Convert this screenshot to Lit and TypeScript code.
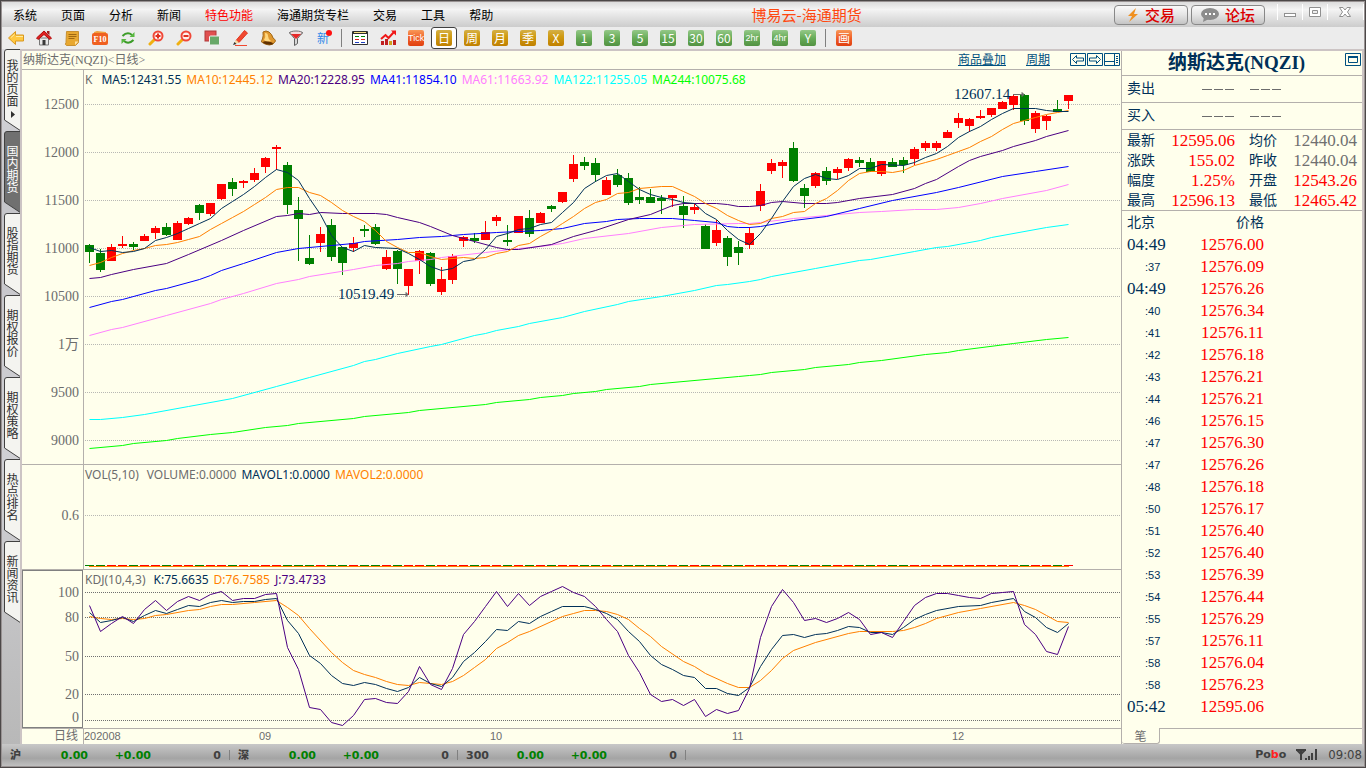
import { LitElement, html, svg, css } from "lit";
import { customElement, state } from "lit/decorators.js";
import { classMap } from "lit/directives/class-map.js";

/* [direction, bodyTop, bodyBottom, high, low] for each trading day */
const CANDLES = `g245 252 244 263|g253 270 249 272|r247 261 244 261|r244 246 236 248|g244 247 242 250|r236 241 234 241|r228 233 226 239|g227 235 223 236|r223 240 221 240|r218 224 217 225|g205 213 204 220|r203 214 203 216|r184 199 184 200|g182 189 178 196|r181 183 180 188|r173 180 168 182|r158 167 157 173|r147 149 145 170|g165 205 162 214|g210 219 197 261|g258 264 235 265|r234 243 227 252|g225 257 219 261|g247 263 247 275|r243 248 237 252|g229 231 225 237|g227 244 224 245|r257 269 250 270|g251 269 250 284|r269 286 269 295|r251 261 250 274|g253 284 252 286|r279 292 267 295|r256 280 254 284|r237 241 236 247|g238 241 233 243|r232 240 221 240|r217 221 215 226|g240 242 225 246|r216 233 216 233|g218 234 210 237|r213 223 212 223|g206 209 205 212|r192 202 192 203|r164 179 155 182|g162 166 157 170|g163 175 158 182|r180 195 177 195|g175 185 169 187|g178 203 173 205|g197 200 187 204|g197 203 189 203|g198 201 195 214|r195 198 195 207|g206 215 196 228|r207 210 203 214|g226 249 224 249|r230 243 220 246|g238 257 236 266|g247 253 241 265|r233 245 227 249|r191 206 184 211|r163 171 159 174|r162 166 160 178|g148 181 142 182|g188 196 184 208|r173 186 172 188|g171 181 167 185|r169 173 167 179|r159 168 158 171|g160 163 157 167|g162 172 158 172|r161 174 161 176|g162 167 158 167|g160 165 157 173|r149 159 147 165|r143 148 141 151|r143 148 141 151|r132 138 130 138|r118 123 113 128|r119 126 118 132|r116 118 110 119|r108 115 108 117|r102 109 101 109|r96 105 95 110|g95 121 94 125|r113 129 111 133|r116 121 115 130|g109 112 100 112|r95 101 95 109`
  .split("|")
  .map((s) => ({ up: s[0] === "r", v: s.slice(1).split(" ").map(Number) }));

/* "index y" pairs; a missing index is interpolated by the line itself */
const LINES: Record<string, string> = {
  ma5: "0 247,1 251,2 250,3 252,4 251,5 248,6 240,7 237,8 233,9 228,10 223,11 218,12 208,13 201,14 194,15 186,16 177,17 169,18 172,19 180,20 198,21 214,22 235,23 247,24 251,25 245,26 247,28 248,29 253,30 259,31 266,32 270,33 268,34 261,35 259,36 249,37 236,38 233,39 229,40 228,41 224,42 222,43 212,44 202,45 188,46 181,47 175,48 173,49 181,50 189,51 194,52 197,53 199,54 202,55 203,56 213,57 219,58 230,59 239,60 244,61 233,62 218,63 201,64 186,65 178,66 174,67 178,68 179,69 175,70 168,71 168,72 164,74 165,75 162,76 157,77 153,78 146,79 137,80 131,81 126,82 119,83 113,84 108,86 108,87 110,88 111,89 111",
  ma10: "0 265,1 262,2 257,3 253,4 250,5 248,6 245,7 244,8 242,9 239,10 236,11 229,12 223,13 217,14 211,15 204,16 197,17 189,18 187,19 187,20 192,21 195,22 202,23 210,24 216,25 221,26 230,27 241,28 247,29 252,30 252,31 256,32 259,34 257,35 258,36 257,37 253,38 251,39 245,40 243,41 236,42 230,43 223,44 216,45 208,46 202,47 199,48 193,49 192,50 188,51 187,52 186,53 186,54 191,55 196,56 203,57 208,58 215,59 220,60 224,61 223,62 218,63 216,64 212,65 211,66 203,67 198,68 190,69 180,70 173,71 171,72 171,73 172,74 170,75 165,76 162,77 159,78 155,79 151,80 147,81 141,82 136,83 129,84 123,85 120,86 117,87 114,88 112,89 110",
  ma20: "0 278,1 277,2 274,4 269,7 263,9 254,12 240,14 230,17 216,18 215,19 213,20 214,21 212,23 213,26 213,27 214,28 217,30 222,31 226,33 235,35 241,37 247,38 249,39 249,42 244,44 236,46 230,49 219,51 214,53 205,54 203,57 203,58 204,59 206,60 206,61 205,62 202,63 201,65 203,67 203,68 202,70 198,73 194,75 188,76 183,77 179,79 166,80 160,81 156,83 150,84 146,86 140,87 136,89 130",
  ma41: "0 307,2 301,3 299,6 290,7 288,10 279,11 275,12 270,14 263,17 252,19 248,22 245,24 243,25 241,28 239,30 237,32 236,34 234,37 232,41 230,43 228,45 223,47 221,48 219,50 218,53 218,55 220,57 222,58 226,59 227,60 227,61 226,64 220,67 216,70 208,73 200,77 192,79 187,83 176,86 171,89 166",
  ma61: "0 335,2 329,3 327,7 315,11 303,12 299,14 293,17 283,19 279,20 276,24 269,26 265,28 263,29 261,31 259,32 257,36 252,39 248,41 246,43 243,45 238,49 233,52 227,54 225,55 224,59 223,60 223,61 222,64 218,68 214,70 212,72 211,75 209,77 209,79 207,81 203,83 198,87 190,89 184",
  ma122: "0 419,1 419,3 417,5 414,9 406,13 398,17 386,20 377,24 365,25 361,26 359,28 353,31 346,32 344,35 335,36 333,37 330,39 326,40 323,43 317,45 311,48 304,49 301,52 296,55 290,57 285,58 284,60 281,61 279,62 276,66 268,70 260,71 259,75 251,77 247,78 246,81 240,82 237,87 227,89 224",
  ma244: "0 448,3 445,4 443,7 440,8 438,11 434,13 432,16 427,18 425,19 423,24 418,25 416,29 412,30 410,36 404,37 402,40 399,41 397,43 395,44 393,46 391,47 389,50 386,51 384,59 376,60 375,61 374,62 372,65 369,66 367,69 364,70 362,72 360,76 354,78 352,79 350,84 343,87 339,89 337",
  k: "0 612,1 622,2 620,3 617,4 621,5 615,6 610,7 613,8 609,9 605,10 606,11 602,12 600,13 602,14 601,15 601,16 599,17 598,18 620,19 633,20 655,21 663,22 675,23 683,24 685,25 682,26 684,27 688,28 691,29 687,30 677,31 683,32 686,33 677,34 661,35 652,36 641,37 629,38 630,39 621,40 623,41 616,42 611,43 606,45 606,46 609,47 613,48 619,49 631,50 641,51 655,52 664,53 669,54 675,55 677,56 688,57 688,58 693,59 695,60 687,61 666,62 649,63 635,64 634,65 637,66 634,67 633,68 630,69 626,70 627,71 632,72 632,73 634,74 627,75 619,76 614,77 610,79 606,81 605,82 602,84 598,85 611,86 617,87 627,88 632,89 623",
  d: "0 616,1 618,2 619,3 618,4 619,5 618,6 615,7 614,9 610,10 609,11 606,12 604,13 604,15 602,17 600,18 607,19 615,20 628,22 652,23 662,24 670,25 674,26 677,27 681,28 684,29 685,30 682,32 684,33 681,34 675,35 667,36 659,37 648,38 642,39 635,40 631,43 616,44 613,45 610,46 610,47 611,48 614,49 619,50 628,51 636,52 646,54 661,55 666,56 673,58 683,59 687,60 687,61 680,62 670,63 658,64 650,66 642,69 633,70 631,73 631,74 630,75 627,76 623,77 618,79 612,81 608,84 602,85 605,86 609,87 615,88 621,89 622",
  j: "0 605,1 631,2 623,3 616,4 623,5 609,6 600,7 610,8 601,9 596,10 600,11 594,12 591,13 600,14 598,15 598,16 594,17 593,18 647,19 669,20 707,21 709,22 722,23 725,24 715,25 699,26 698,27 702,28 703,29 691,30 666,31 684,32 689,33 668,34 634,35 621,36 606,37 591,38 606,39 593,40 605,41 596,42 591,43 586,44 592,45 596,46 606,47 619,48 631,49 655,50 672,51 694,52 701,53 699,54 705,55 699,56 716,57 709,58 713,59 710,60 688,61 637,62 606,63 589,64 602,65 620,66 618,67 622,68 618,69 612,70 619,71 634,72 632,73 637,74 621,75 605,76 597,77 593,78 593,79 595,80 597,81 598,82 593,83 592,84 591,85 624,86 634,87 651,88 654,89 626",
};

const STEP = 11;
const HALF = 0.5;

const poly = (name: string, top: number) => {
  const pts = LINES[name]
    .split(",")
    .map((p) => p.split(" ").map(Number))
    .map(([i, y]) => `${5 + HALF + i * STEP},${y - top + HALF}`)
    .join(" ");
  return svg`<polyline class="line ${name}" points=${pts}></polyline>`;
};

const gridLine = (y: number, cls = "grid") =>
  svg`<line class=${cls} x1="1" x2="100%" y1=${y + HALF} y2=${y + HALF}></line>`;

/* ---------- chart ---------- */
@customElement("quote-chart")
class QuoteChart extends LitElement {
  static styles = css`
    :host { display: flex; flex-direction: column; min-width: 0; min-height: 0; background: #ffffec; color: #6c6c6c;
      font: 12px/18px "Liberation Serif", "Noto Sans CJK SC", serif; }
    .head { display: flex; align-items: center; height: 18px; border-bottom: 1px solid #b4b0ac; padding-left: 1px; }
    .name { flex: 1; }
    a { color: #005080; margin-right: 20px; line-height: 18px; text-underline-offset: 1px; }
    .tools { display: flex; }
    .tools button { width: 17px; height: 16px; padding: 0; border: 0; background: none; }
    .tools svg { display: block; }
    .panel { display: flex; box-sizing: border-box; border-bottom: 1px solid #b4b0ac; min-height: 0; }
    .main { flex: 1; }
    .vol { height: 105px; }
    .kdj { height: 159px; }
    .axis { width: 62px; flex: none; box-sizing: border-box; border-right: 1px solid #b4b0ac; display: grid; }
    .axis.on { border: 1px solid #808080; width: 61px; margin-right: 1px; }
    .plot { flex: 1; min-width: 0; display: grid; }
    .plot > *, .axis > * { grid-area: 1 / 1; min-height: 0; }
    svg.fill { display: block; width: 100%; height: 100%; overflow: hidden; }
    .axis text { fill: #6c6c6c; font: 14px "Liberation Serif", "Noto Sans CJK SC", serif; text-anchor: end; }
    .legend { display: flex; gap: 5px; height: 20px; padding-left: 1px; font: 12px/20px "Noto Sans", sans-serif; white-space: nowrap; }
    .legend .gapped { margin-right: 4px; }
    .legend .label { margin-right: 3px; }
    .grid { stroke: #b8b8b4; stroke-dasharray: 1 1; }
    .dark { stroke: #707070; stroke-dasharray: 1 1; }
    .line { fill: none; stroke-width: 1; }
    .up { fill: #ff0000; } .down { fill: #008000; }
    .mark { fill: #003058; font: 15px "Liberation Serif", serif; }
    .arrow { stroke: #6c6c6c; fill: #6c6c6c; }
    .ma5, .k { stroke: #003058; } .ma10, .d { stroke: #ff8000; } .ma20, .j { stroke: #4b0082; }
    .ma41 { stroke: #0000ff; } .ma61 { stroke: #ff80ff; } .ma122 { stroke: #00ffff; } .ma244 { stroke: #00ff00; }
    .c5 { color: #003058; } .c10 { color: #ff8000; } .c20 { color: #4b0082; } .c41 { color: #0000ff; }
    .c61 { color: #ff80ff; } .c122 { color: #00ffff; } .c244 { color: #00ff00; }
    .dates { display: flex; height: 15px; line-height: 15px; }
    .period { width: 62px; flex: none; box-sizing: border-box; padding-right: 5px; border-right: 1px solid #b4b0ac; text-align: right; }
    .dates svg text { fill: #6c6c6c; font: 11px "Liberation Sans", sans-serif; }
    .dates svg { flex: 1; height: 15px; }
  `;

  private label(y: number, t: string, x = 57) {
    return svg`<text x=${x} y=${y + 5}>${t}</text>`;
  }

  render() {
    const prices = ["12500", "12000", "11500", "11000", "10500", "1万", "9500", "9000"];
    return html`
      <div class="head">
        <span class="name">纳斯达克(NQZI)&lt;日线&gt;</span>
        <a href="#overlay">商品叠加</a><a href="#period">周期</a>
        <div class="tools">
          <button aria-label="左移"><svg width="17" height="16"><path fill="#ffffec" stroke="#005080" d="M.5 1.5h15v12H.5z"/><path fill="none" stroke="#005080" d="M2.5 7.5l4-4v2.500h7v3h-7v2.500z"/></svg></button>
          <button aria-label="右移"><svg width="17" height="16"><path fill="#ffffec" stroke="#005080" d="M.5 1.500h15v12H.5z"/><path fill="none" stroke="#005080" d="M13.500 7.500l-4-4v2.500h-7v3h7v2.500z"/></svg></button>
          <button aria-label="布局"><svg width="17" height="16"><path fill="#ffffec" stroke="#005080" d="M.5 1.500h15v12H.5zM10.500 2v12M1 9.500h9"/><path stroke="#005080" d="M12 4.500h2M12 6.500h2M12 8.500h2M12 10.500h2"/></svg></button>
        </div>
      </div>

      <div class="panel main">
        <div class="axis"><svg class="fill">${prices.map((p, i) => this.label(34 + 48 * i, p))}</svg></div>
        <div class="plot">
          <svg class="fill">
            ${prices.map((_, i) => gridLine(34 + 48 * i))}
            ${CANDLES.map(({ up, v }, i) => svg`
              <g class=${up ? "up" : "down"} shape-rendering="crispEdges">
                <rect x=${5 + STEP * i} y=${v[2] - 70} width="1" height=${v[3] - v[2]}></rect>
                <rect x=${1 + STEP * i} y=${v[0] - 70} width="9" height=${v[1] - v[0]}></rect>
              </g>`)}
            ${["ma244", "ma122", "ma61", "ma41", "ma20", "ma10", "ma5"].map((n) => poly(n, 70))}
            <text class="mark" x="870" y="29">12607.14</text>
            <path class="arrow" d="M929 24.500h11M938 22.500l2 2-2 2z"/>
            <text class="mark" x="254" y="229">10519.49</text>
            <path class="arrow" d="M313 224.500h11M322 222.500l2 2-2 2z"/>
          </svg>
          <div class="legend">
            <span class="gapped">K</span>
            <span class="c5">MA5:12431.55</span><span class="c10">MA10:12445.12</span>
            <span class="c20">MA20:12228.95</span><span class="c41">MA41:11854.10</span>
            <span class="c61">MA61:11663.92</span><span class="c122">MA122:11255.05</span>
            <span class="c244">MA244:10075.68</span>
          </div>
        </div>
      </div>

      <div class="panel vol">
        <div class="axis"><svg class="fill">${this.label(50, "0.6")}</svg></div>
        <div class="plot">
          <svg class="fill">
            ${gridLine(50)}
            ${CANDLES.map(({ up }, i) => svg`<rect class=${up ? "up" : "down"} x=${1 + STEP * i} y="100" width="9" height="1"></rect>`)}
            <path class="ma10" d="M5 101.500h980"/>
          </svg>
          <div class="legend">
            <span class="label">VOL(5,10)</span><span>VOLUME:0.0000</span><span class="c5">MAVOL1:0.0000</span><span class="c10">MAVOL2:0.0000</span>
          </div>
        </div>
      </div>

      <div class="panel kdj">
        <div class="axis on"><svg class="fill">
          ${this.label(21, "100", 56)}${this.label(46, "80", 56)}${this.label(85, "50", 56)}${this.label(123, "20", 56)}${this.label(146, "0", 56)}
        </svg></div>
        <div class="plot">
          <svg class="fill">
            ${[22, 47, 86, 124, 150].map((y) => gridLine(y, "dark"))}
            ${["d", "k", "j"].map((n) => poly(n, 570))}
          </svg>
          <div class="legend">
            <span class="label">KDJ(10,4,3)</span><span class="c5">K:75.6635</span><span class="c10">D:76.7585</span><span class="c20">J:73.4733</span>
          </div>
        </div>
      </div>

      <div class="dates">
        <span class="period">日线</span>
        <svg>
          <text x="0" y="11">202008</text><text x="175" y="11">09</text><text x="406" y="11">10</text><text x="648" y="11">11</text><text x="868" y="11">12</text>
        </svg>
      </div>
    `;
  }
}

/* ---------- quote panel ---------- */
@customElement("quote-panel")
class QuotePanel extends LitElement {
  static styles = css`
    :host { display: flex; flex-direction: column; box-sizing: border-box; width: 241px; background: #ffffec; border-left: 1px solid #b4b0ac;
      color: #003058; font: 14px/20px "Liberation Serif", "Noto Sans CJK SC", serif; }
    .title { display: flex; align-items: center; height: 24px; border-bottom: 1px solid #b4b0ac; }
    h1 { flex: 1; margin: 0; padding-left: 6px; text-align: center; font: bold 19px/24px "Liberation Serif", "Noto Sans CJK SC", serif; }
    .title button { padding: 0; border: 0; background: none; height: 15px; width: 17px; margin: 0 0 8px 0; }
    .title svg { display: block; }
    .side { display: flex; align-items: center; height: 26px; border-bottom: 1px solid #b4b0ac; padding-left: 5px; }
    .side span { width: 75px; }
    .side svg { display: block; }
    dl { margin: 0; display: grid; grid-template-columns: 36px 72px 42px 1fr; padding: 0 5px; border-bottom: 1px solid #b4b0ac; grid-auto-rows: 20px; line-height: 22px; }
    dt { padding: 0; } dt.second { padding-left: 14px; }
    dd { margin: 0; text-align: right; font-size: 17px; }
    .red { color: #ff0000; } .gray { color: #707070; }
    table { border-collapse: collapse; width: 142px; margin-left: 5px; }
    th { font-weight: normal; padding: 0; height: 23px; text-align: left; }
    th.price { text-align: right; padding-right: 5px; }
    td { padding: 0; height: 22px; font-size: 17px; line-height: 22px; }
    td.sec { font: 11px/22px "Liberation Sans", sans-serif; padding-left: 18px; }
    td.price { color: #ff0000; text-align: right; width: 90px; padding-right: 5px; }
    .foot { margin-top: auto; display: flex; height: 16px; }
    .foot button { width: 38px; padding: 0; border: 1px solid #b4b0ac; border-width: 0 1px 1px 0; border-radius: 0 0 3px 3px; background: none; color: #6c6c6c; font: 12px/15px "Noto Sans CJK SC", sans-serif; }
    .rest { flex: 1; border-top: 1px solid #b4b0ac; }
  `;

  private quotes: [string, string, string, string, string, string][] = [
    ["最新", "12595.06", "red", "均价", "12440.04", "gray"],
    ["涨跌", "155.02", "red", "昨收", "12440.04", "gray"],
    ["幅度", "1.25%", "red", "开盘", "12543.26", "red"],
    ["最高", "12596.13", "red", "最低", "12465.42", "red"],
  ];
  private ticks = "04:49 00,:37 09,04:49 26,:40 34,:41 11,:42 18,:43 21,:44 21,:46 15,:47 30,:47 26,:48 18,:50 17,:51 40,:52 40,:53 39,:54 44,:55 29,:57 11,:58 04,:58 23"
    .split(",")
    .map((s) => s.split(" "))
    .map(([t, c]) => [t, `12576.${c}`])
    .concat([["05:42", "12595.06"]]);

  private empty() {
    return html`<svg width="82" height="4" role="img" aria-label="--- ---"><path stroke="#6c6c6c" d="M0 2.500h10M12 2.500h9M23 2.500h9M48 2.500h9M59 2.500h9M70 2.500h9"/></svg>`;
  }

  render() {
    return html`
      <div class="title">
        <h1>纳斯达克(NQZI)</h1>
        <button aria-label="最大化"><svg width="16" height="15"><path fill="none" stroke="#005080" d="M.5 1.500h15v12H.5z"/><path fill="none" stroke="#005080" d="M3.500 4.500h9v6h-9z"/><path fill="#005080" d="M3 4h10v2H3z"/></svg></button>
      </div>
      <div class="side"><span>卖出</span>${this.empty()}</div>
      <div class="side"><span>买入</span>${this.empty()}</div>
      <dl>
        ${this.quotes.map(([a, b, c, d, e, f]) => html`
          <dt>${a}</dt><dd class=${c}>${b}</dd><dt class="second">${d}</dt><dd class=${f}>${e}</dd>`)}
      </dl>
      <table>
        <thead><tr><th>北京</th><th class="price">价格</th></tr></thead>
        <tbody>
          ${this.ticks.map(([t, p]) => html`<tr><td class=${t[0] === ":" ? "sec" : ""}>${t}</td><td class="price">${p}</td></tr>`)}
        </tbody>
      </table>
      <div class="foot"><button>笔</button><div class="rest"></div></div>
    `;
  }
}

/* ---------- toolbar icons ---------- */
const ICONS: Record<string, unknown> = {
  返回: svg`<path fill="#ffc840" stroke="#d89820" d="M.5 8L7.500 1.500V5H15.500v6H7.500v3.500z"/><path stroke="#ffeaa0" d="M3 7.500l3.500-3M8 6.500h7"/>`,
  首页: svg`<path fill="#e8e8e8" stroke="#787878" d="M3.500 8h9v7h-9z"/><path fill="#e02020" stroke="#b00c0c" d="M.5 8L8 1l7.500 7-1.500 1.500L8 4.500 2 9.500z"/><path fill="#a02020" d="M11 1h2.500v4L11 3z"/><path fill="#383838" d="M6.500 10h3v5h-3z"/>`,
  公告: svg`<path fill="#e8a830" stroke="#c89030" d="M2.500 1.500h12v11l-3 3h-9q-2-1-.5-3z"/><path stroke="#a06810" d="M4.500 4.500h8M4.500 6.500h8M4.500 8.500h6"/><path fill="#ffe0a0" d="M11 15v-3.500h3.500z"/>`,
  刷新: svg`<path fill="none" stroke="#3c9c28" stroke-width="2" d="M2.500 6q5-5 9.500-1M13.500 10q-5 5-9.500 1"/><path fill="#58b840" d="M14.500 2v5H9.500zM1.500 14v-5h5z"/>`,
  放大: svg`<path stroke="#f0b010" stroke-width="3" stroke-linecap="round" d="M2 14l4-4"/><circle cx="10" cy="6" r="4.500" fill="#fff0ec" stroke="#f04838" stroke-width="2"/><path stroke="#e03020" stroke-width="2" d="M7.500 6h5M10 3.500v5"/>`,
  缩小: svg`<path stroke="#f0b010" stroke-width="3" stroke-linecap="round" d="M2 14l4-4"/><circle cx="10" cy="6" r="4.500" fill="#fff0ec" stroke="#f04838" stroke-width="2"/><path stroke="#e03020" stroke-width="2" d="M7.500 6h5"/>`,
  叠加: svg`<rect x="1" y="1" width="11" height="10" fill="#e05050" stroke="#b03838"/><rect x="5.500" y="6" width="10" height="9" rx="1" fill="#68a868" stroke="#f0f0f0"/>`,
  画线: svg`<path fill="#f04830" stroke="#e03820" d="M4 10.500l8.500-10 3 2.500-8.500 9.500z"/><path fill="#f8d8a0" d="M4 10l3 2.500-5 2z"/><path fill="#303030" d="M1 15l1.500-3 2 2z"/><path stroke="#f04830" d="M3 15.500h12"/>`,
  预警: svg`<path fill="#e09830" stroke="#a06818" d="M3 2q3-2 6 0 3 2 4 6 2 1 2.500 3-2 4-6 4-4 0-8-3 0-2 1-3 1-3 .5-7z"/><path fill="#ffd880" d="M5 3q3 0 3 3 0 3 3 5l-4 1-3-2q2-3 1-7z"/><ellipse cx="8" cy="13" rx="5" ry="1.500" fill="#603000" transform="rotate(8 8 13)"/>`,
  筛选: svg`<path fill="#d8d8d8" stroke="#606060" d="M1.500 2.500l5 6v7l3-2v-5l5-6z"/><ellipse cx="8" cy="3" rx="6.500" ry="2" fill="#f4dada" stroke="#707070"/><path fill="#e82828" d="M3 4h10L8 9z"/>`,
};
const TABLE_ICON = svg`<path fill="#fff" stroke="#303030" d="M.5 1.500h15v13H.5z"/><path fill="#303030" d="M1 1h14v3H1z"/><path stroke="#f8e080" d="M2 2.500h12"/><path stroke="#008000" d="M3 6.500h4M9 6.500h4"/><path stroke="#e02020" d="M3 9.500h4M9 9.500h4"/><path stroke="#2040c0" d="M3 12.500h4M9 12.500h4"/>`;
const TREND_ICON = svg`<path fill="#c02020" d="M1 11h3v4H1zM5 9h3v6H5zM13 10h3v5h-3z"/><path fill="#d0a020" d="M9 11h3v4H9z"/><path fill="none" stroke="#f01818" stroke-width="2" d="M1 9l4.500-4 3 3L14 2"/><path fill="#f01818" d="M11 .5h5v5z"/>`;

@customElement("app-root")
class AppRoot extends LitElement {
  @state() private period = "日";
  @state() private tab = "国内期货";

  static styles = css`
    :host { display: flex; flex-direction: column; box-sizing: border-box; height: 100vh; border: 1px solid #4c4848; outline: 1px solid #989292; outline-offset: -2px; padding: 1px;
      background: #ececec; color: #000; font: 12px/16px "Noto Sans CJK SC", sans-serif; overflow: hidden; }
    button { font: inherit; color: inherit; padding: 0; border: 0; background: none; }
    .menubar { display: flex; align-items: center; flex: none; height: 25px; background: linear-gradient(#dcdcdc, #f4f4f4 30%, #e8e8e8 50%, #cccccc); }
    nav { display: flex; gap: 24px; padding-left: 11px; }
    .hot { color: #ff0000; }
    .caption { flex: 1; text-align: center; padding-left: 6px; font-size: 15px; color: #ff4810; }
    .actions { display: flex; gap: 3px; }
    .actions button { display: flex; align-items: center; justify-content: center; gap: 6px; box-sizing: border-box; width: 74px; height: 20px; border: 1px solid #888; border-radius: 4px;
      background: linear-gradient(#fafafa, #e4e4e4 50%, #c4c4c4); color: #dc0000; font-weight: 500; font-size: 15px; line-height: 18px; }
    .win { display: flex; padding-left: 12px; }
    .win button { width: 25px; height: 16px; border-left: 1px solid #fff; margin-bottom: 6px; }
    .win button:last-child { width: 37px; border-right: 1px solid #fff; }
    .win svg { display: block; margin: auto; }

    .toolbar { display: flex; align-items: center; flex: none; height: 22px; background: #ececec; }
    .toolbar button { width: 28px; height: 22px; display: grid; place-items: center; flex: none; }
    .toolbar .sel { box-sizing: border-box; width: 26px; margin: 0 1px; background: #fff; border: 1px solid #404040; border-radius: 3px; }
    .sep { width: 1px; height: 18px; margin: 0 4px 0 3px; background: #808080; }
    .tile { display: block; width: 16px; height: 16px; border-radius: 2px; color: #fff; text-align: center; font: 12px/16px "Noto Sans CJK SC", sans-serif; }
    .gold { background: linear-gradient(#d4b048, #d09c14 40%, #c08000); }
    .green { background: linear-gradient(#94c888, #68ac58 50%, #529242); }
    .orange { background: linear-gradient(#f89858, #f06028 50%, #e04010); }
    .small { font-family: "Liberation Sans Narrow", "Liberation Sans", sans-serif; font-size: 9px; }
    .toolbar .new { color: #3088e8; justify-items: start; }
    .new span, .new svg { grid-area: 1 / 1; }
    .new span { padding-left: 7px; }

    .body { display: flex; flex: 1; min-height: 0; }
    .tabs { width: 16px; padding-left: 2px; flex: none; background: linear-gradient(#dcdce0, #c4c4c8 20%, #d0d0d4 60%, #b8b8b8); overflow: hidden; }
    .tabs button { display: grid; width: 16px; height: 82px; }
    .tabs svg, .tabs span { grid-area: 1 / 1; }
    .tabs span { writing-mode: vertical-rl; padding-top: 14px; text-align: left; line-height: 17px; color: #303030; }
    .tabs .first span { padding-top: 10px; }
    .tabs .on span { color: #fff; }
    .tabs path.shape { fill: #f4f4f0; stroke: #404040; }
    .tabs .on path.shape { fill: #707070; }
    .work { display: flex; flex: 1; min-width: 0; border: 2px solid #ccc4c4; border-bottom: 0; }
    quote-chart { flex: 1; }

    .status { display: flex; flex: none; height: 22px; background: linear-gradient(#c8c8c8, #a4a4a4 65%, #c0c0c0); color: #404040; font: bold 11px/24px "DejaVu Sans", "Noto Sans CJK SC", sans-serif; }
    .market { display: grid; grid-template-columns: 26px 60px 63px 70px; width: 228px; text-align: right; background: linear-gradient(#808080, #808080) right center / 1px 10px no-repeat; }
    .market b { text-align: left; padding-left: 8px; white-space: nowrap; }
    .market .n { color: #008000; }
    .end { margin-left: auto; display: flex; align-items: center; gap: 10px; padding-right: 2px; }
    .end .red { color: #ff2020; }
    .end time { font: 13px/24px "DejaVu Sans Condensed", "Noto Sans", sans-serif; }
  `;

  private tile(t: string, kind: string) {
    return html`<span class=${classMap({ tile: true, [kind]: true, small: t.length > 2 })}>${t}</span>`;
  }

  render() {
    const golds = ["日", "周", "月", "季", "X"];
    const greens = ["1", "3", "5", "15", "30", "60", "2hr", "4hr", "Y"];
    const tabs = ["我的页面", "国内期货", "股指期货", "期权报价", "期权策略", "热点排名", "新闻资讯"];
    const names = Object.keys(ICONS);
    const icon = (g: unknown) => html`<svg width="16" height="16" viewBox="0 0 16 16">${g}</svg>`;
    const btn = (n: string) => html`<button aria-label=${n}>${icon(ICONS[n])}</button>`;
    return html`
      <div class="menubar">
        <nav>
          ${["系统", "页面", "分析", "新闻", "特色功能", "海通期货专栏", "交易", "工具", "帮助"].map(
            (m) => html`<button class=${classMap({ hot: m === "特色功能" })}>${m}</button>`)}
        </nav>
        <span class="caption">博易云-海通期货</span>
        <div class="actions">
          <button><svg width="12" height="14" viewBox="0 0 12 14"><path fill="#f09020" d="M9 0L1 8h4l-3 6 9-8H7z"/></svg>交易</button>
          <button><svg width="18" height="14" viewBox="0 0 18 14"><ellipse cx="9" cy="6" rx="9" ry="6" fill="#8c8c8c"/><path fill="#8c8c8c" d="M3 9l-1 5 6-3z"/><path fill="#fff" d="M4 5h2v2H4zM8 5h2v2H8zM12 5h2v2h-2z"/></svg>论坛</button>
        </div>
        <div class="win">
          <button aria-label="最小化"><svg width="13" height="12"><rect x=".5" y="7.500" width="11" height="3" fill="#fff" stroke="#909090"/></svg></button>
          <button aria-label="还原"><svg width="13" height="12"><path fill="#fff" stroke="#909090" fill-rule="evenodd" d="M.5 1.500h11v9H.5zM3.500 4.500v3h5v-3z"/></svg></button>
          <button aria-label="关闭"><svg width="13" height="12"><path fill="#fff" stroke="#909090" d="M.5 1.500h3.500l2 2.500 2-2.500h3.500L8.500 6l3 4.500H8L6 8l-2 2.500H.5l3-4.500z"/></svg></button>
        </div>
      </div>

      <div class="toolbar">
        ${names.slice(0, 3).map(btn)}
        <button aria-label="F10"><svg width="16" height="16" viewBox="0 0 16 16"><path fill="#f0a040" d="M2 2l3-1 9 1v2H2z"/><rect x="0" y="3" width="16" height="12" rx="2" fill="#f06020"/><text x="8" y="12" fill="#fff" text-anchor="middle" font-family="Liberation Serif" font-weight="bold" font-size="8">F10</text></svg></button>
        ${names.slice(3).map(btn)}
        <button class="new" aria-label="新"><span>新</span><svg width="24" height="18"><circle cx="19" cy="4" r="3" fill="#ff1010"/></svg></button>
        <span class="sep"></span>
        <button aria-label="报价">${icon(TABLE_ICON)}</button>
        <button aria-label="走势">${icon(TREND_ICON)}</button>
        <button>${this.tile("Tick", "orange")}</button>
        ${golds.map((g) => html`<button class=${classMap({ sel: g === this.period })} @click=${() => (this.period = g)}>${this.tile(g, "gold")}</button>`)}
        ${greens.map((g) => html`<button class=${classMap({ sel: g === this.period })} @click=${() => (this.period = g)}>${this.tile(g, "green")}</button>`)}
        <span class="sep"></span>
        <button>${this.tile("画", "orange")}</button>
      </div>

      <div class="body">
        <div class="tabs">
          ${tabs.map((t, i) => html`
            <button class=${classMap({ on: t === this.tab, first: i === 0 })} @click=${() => (this.tab = t)}>
              <svg width="16" height="82"><path class="shape" d="M17 .5H3Q.5 .5 .5 3V71L17 82z"/>${i === 0 ? svg`<path d="M7 62v7l4-3.500z" fill="#303030"/>` : ""}</svg>
              <span>${t}</span>
            </button>`)}
        </div>
        <div class="work"><quote-chart></quote-chart><quote-panel></quote-panel></div>
      </div>

      <div class="status">
        ${["沪", "深", "300"].map((m) => html`<div class="market"><b>${m}</b><span class="n">0.00</span><span class="n">+0.00</span><span>0</span></div>`)}
        <div class="end">
          <span>Po<span class="red">b</span>o</span>
          <svg width="22" height="14"><path fill="none" stroke="#404040" stroke-width="2" d="M0 2h10M1 2l4 4 4-4M5 3v9"/><path fill="#404040" d="M9 10h2v2H9zM12 8h2v4h-2zM15 5h2v7h-2zM19 1h2v11h-2z"/></svg>
          <time>09:08</time>
        </div>
      </div>
    `;
  }
}
